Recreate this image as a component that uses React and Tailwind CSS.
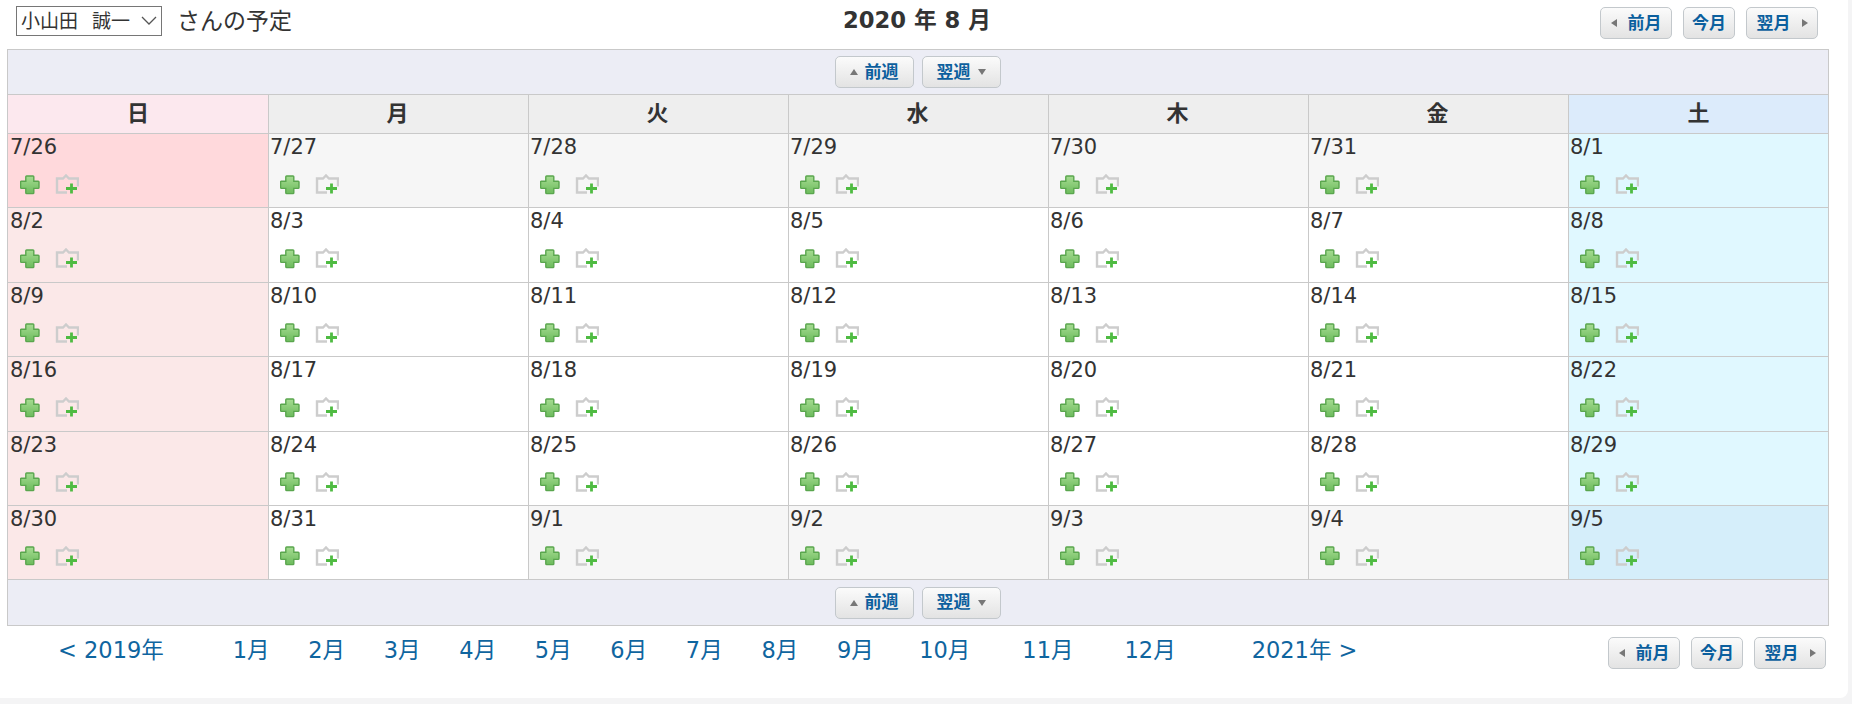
const FONT = "font-['Verdana','DejaVu_Sans','Noto_Sans_CJK_JP',sans-serif]";

function PlusIcon() {
  return (
    <svg width="20" height="20" viewBox="0 0 20 20" className="block">
      <defs>
        <linearGradient id="pg" x1="0" y1="0" x2="0" y2="1">
          <stop offset="0" stopColor="#a6dc92" />
          <stop offset="1" stopColor="#6cbb5c" />
        </linearGradient>
      </defs>
      <path
        d="M6.6 1h6.4a.8.8 0 0 1 .8.8v4.400h4.400a.8.8 0 0 1 .8.8v5.600a.8.8 0 0 1-.8.8h-4.400v4.400a.8.8 0 0 1-.8.8H6.600a.8.8 0 0 1-.8-.8v-4.400H1.400a.8.8 0 0 1-.8-.8V7a.8.8 0 0 1 .8-.8h4.400V1.800a.8.8 0 0 1 .8-.8z"
        fill="url(#pg)"
        stroke="#5aa64e"
        strokeWidth="1.4"
      />
    </svg>
  );
}

function FolderIcon() {
  return (
    <svg width="24" height="21" viewBox="0 0 24 21" className="block">
      <path
        d="M12 18.500H2V4.500h6l3-3 3 3h9v8"
        fill="none"
        stroke="#cdcdcd"
        strokeWidth="2.4"
      />
      <path d="M11 14.500h11M16.500 9.500v10" stroke="#4fbb42" strokeWidth="2.8" fill="none" />
    </svg>
  );
}

function Tri({ dir }) {
  const cls = {
    up: "border-x-[4px] border-x-transparent border-b-[6px] border-b-[#777]",
    down: "border-x-[4px] border-x-transparent border-t-[6px] border-t-[#777]",
    left: "border-y-[4px] border-y-transparent border-r-[6px] border-r-[#777]",
    right: "border-y-[4px] border-y-transparent border-l-[6px] border-l-[#777]",
  }[dir];
  return <span className={`inline-block w-0 h-0 ${cls}`} />;
}

function Btn({ children, w, gap = "gap-[7px]" }) {
  return (
    <button
      className={`${w} h-[32px] flex items-center justify-center ${gap} rounded-[5px] border border-[#c3c8cc] bg-gradient-to-b from-[#fbfbfb] to-[#e3e3e3] text-[17px] font-bold text-[#0b5f9e] leading-none`}
    >
      {children}
    </button>
  );
}

function WeekBar({ bottom }) {
  return (
    <div className={`flex h-[45px] items-center justify-center gap-[8px] bg-[#ecedf5] pr-[1px] ${bottom ? "" : "border-b border-[#c9c9c9]"}`}>
      <Btn w="w-[79px]"><Tri dir="up" />前週</Btn>
      <Btn w="w-[79px]">翌週<Tri dir="down" /></Btn>
    </div>
  );
}

function MonthBtns() {
  return (
    <div className="flex gap-[11px]">
      <Btn w="w-[72px]" gap="gap-[11px]"><Tri dir="left" />前月</Btn>
      <Btn w="w-[52px]">今月</Btn>
      <Btn w="w-[72px]" gap="gap-[11px]">翌月<Tri dir="right" /></Btn>
    </div>
  );
}

const heads = ["日", "月", "火", "水", "木", "金", "土"];
const headBg = ["bg-[#fce8ee]", "bg-[#eeeeee]", "bg-[#eeeeee]", "bg-[#eeeeee]", "bg-[#eeeeee]", "bg-[#eeeeee]", "bg-[#dcebfb]"];

const days = [
  "7/26", "7/27", "7/28", "7/29", "7/30", "7/31", "8/1",
  "8/2", "8/3", "8/4", "8/5", "8/6", "8/7", "8/8",
  "8/9", "8/10", "8/11", "8/12", "8/13", "8/14", "8/15",
  "8/16", "8/17", "8/18", "8/19", "8/20", "8/21", "8/22",
  "8/23", "8/24", "8/25", "8/26", "8/27", "8/28", "8/29",
  "8/30", "8/31", "9/1", "9/2", "9/3", "9/4", "9/5",
];

function cellBg(d, i) {
  if (d === "7/26") return "bg-[#ffd9dc]";
  if (d === "9/5") return "bg-[#d5eefa]";
  if (i % 7 === 0) return "bg-[#fbe8e8]";
  if (i % 7 === 6) return "bg-[#e0f8ff]";
  if (d.startsWith("8/")) return "bg-white";
  return "bg-[#f6f6f6]";
}

function Link({ children, cls = "" }) {
  return <a className={`text-[#0f659f] text-[22.5px] leading-none whitespace-nowrap ${cls}`}>{children}</a>;
}

export default function App() {
  return (
    <div className={`w-[1852px] h-[704px] bg-[#f4f4f5] overflow-hidden text-[#333] ${FONT}`}>
      <div className="w-[1848px] h-[698px] bg-white rounded-br-[8px]">
        <div className="h-[49px] pl-[16px] pr-[30px] grid grid-cols-[1fr_auto_1fr] items-start">
          <div className="flex items-center gap-[15px] pt-[6px]">
            <div className="relative w-[146px] h-[30px] border border-[#767676] flex items-center pl-[4px] text-[19px] leading-none">
              小山田&nbsp;&nbsp;<span className="ml-[2px]">誠一</span>
              <svg width="16" height="10" viewBox="0 0 16 10" className="absolute right-[4px] top-[9px]">
                <path d="M1 1l7 7 7-7" fill="none" stroke="#555" strokeWidth="1.3" />
              </svg>
            </div>
            <span className="text-[23px] leading-none">さんの予定</span>
          </div>
          <div className="pt-[9px] text-[22.7px] font-bold leading-none">2020 年 8 月</div>
          <div className="flex justify-end pt-[7px]"><MonthBtns /></div>
        </div>

        <div className="ml-[7px] w-[1822px] border border-[#c9c9c9]">
          <WeekBar />
          <div className="grid grid-cols-[261px_260px_260px_260px_260px_260px_1fr]">
            {heads.map((h, i) => (
              <div
                key={h}
                className={`h-[39px] flex items-center justify-center border-b border-[#c9c9c9] text-[22px] font-bold leading-none ${headBg[i]} ${i < 6 ? "border-r" : ""} ${i > 0 && i < 6 ? "pr-[2px]" : ""}`}
              >
                {h}
              </div>
            ))}
            {days.map((d, i) => (
              <div
                key={d}
                className={`h-[74.4px] border-b border-[#c9c9c9] ${cellBg(d, i)} ${i % 7 < 6 ? "border-r" : ""}`}
              >
                <div className={`pt-[1px] text-[21px] leading-[24px] text-[#333] ${i % 7 === 0 ? "pl-[2px]" : "pl-[1px]"}`}>{d}</div>
                <div className={`flex items-center gap-[15px] pt-[15px] ${i % 7 === 0 ? "pl-[12px]" : "pl-[11px]"}`}>
                  <PlusIcon />
                  <FolderIcon />
                </div>
              </div>
            ))}
          </div>
          <WeekBar bottom />
        </div>

        <div className="flex items-start pl-[58px] pr-[22px] pt-[11px]">
          <div className="flex items-center h-[26px]">
            <Link>&lt; 2019年</Link>
            <Link cls="ml-[69px]">1月</Link>
            <Link cls="ml-[38.7px]">2月</Link>
            <Link cls="ml-[38.7px]">3月</Link>
            <Link cls="ml-[38.7px]">4月</Link>
            <Link cls="ml-[38.7px]">5月</Link>
            <Link cls="ml-[38.7px]">6月</Link>
            <Link cls="ml-[38.7px]">7月</Link>
            <Link cls="ml-[38.7px]">8月</Link>
            <Link cls="ml-[38.7px]">9月</Link>
            <Link cls="ml-[45.5px]">10月</Link>
            <Link cls="ml-[52px]">11月</Link>
            <Link cls="ml-[51px]">12月</Link>
            <Link cls="ml-[76px]">2021年 &gt;</Link>
          </div>
          <div className="ml-auto"><MonthBtns /></div>
        </div>
      </div>
    </div>
  );
}
